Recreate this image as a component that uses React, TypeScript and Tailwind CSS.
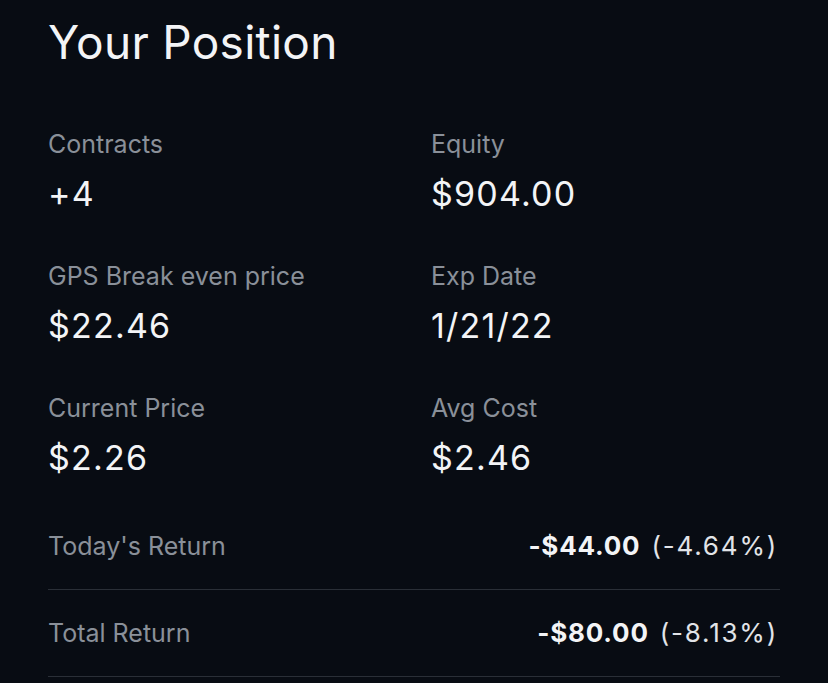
import React from 'react';

const STATS = [
  { label: 'Contracts', value: '+4' },
  { label: 'Equity', value: '$904.00' },
  { label: 'GPS Break even price', value: '$22.46' },
  { label: 'Exp Date', value: '1/21/22' },
  { label: 'Current Price', value: '$2.26' },
  { label: 'Avg Cost', value: '$2.46' },
];

const RETURNS = [
  { label: "Today's Return", amount: '-$44.00', pct: '(-4.64%)' },
  { label: 'Total Return', amount: '-$80.00', pct: '(-8.13%)' },
];

const App: React.FC = () => {
  return (
    <div
      className="min-h-screen w-full bg-[#080c13] px-12 pt-[14px] text-[#f3f4f6] overflow-hidden"
      style={{ fontFamily: 'Inter, "Liberation Sans", sans-serif' }}
    >
      <h1 className="text-[46px] leading-[56px] font-normal tracking-[0.3px]">Your Position</h1>

      <div className="mt-[58px] grid grid-cols-2 gap-x-[34px] gap-y-[46px]">
        {STATS.map(s => (
          <div key={s.label} className="flex flex-col">
            <span className="text-[25px] leading-[32px] text-[#8a9099]">{s.label}</span>
            <span className="mt-[14px] text-[34px] leading-[40px] tracking-[1.2px] text-[#f3f4f6]">{s.value}</span>
          </div>
        ))}
      </div>

      <div className="mt-[25px] flex flex-col">
        {RETURNS.map(r => (
          <div key={r.label} className="flex items-center justify-between py-[27px] border-b border-[#2a2f37]">
            <span className="text-[25px] leading-[32px] text-[#8a9099]">{r.label}</span>
            <span className="text-[26px] leading-[32px] pr-[2px]">
              <span className="font-bold tracking-[0.8px] text-[#f3f4f6]">{r.amount}</span>
              <span className="ml-[11px] tracking-[1.8px] text-[#e2e4e8]">{r.pct}</span>
            </span>
          </div>
        ))}
      </div>
    </div>
  );
};

export default App;
